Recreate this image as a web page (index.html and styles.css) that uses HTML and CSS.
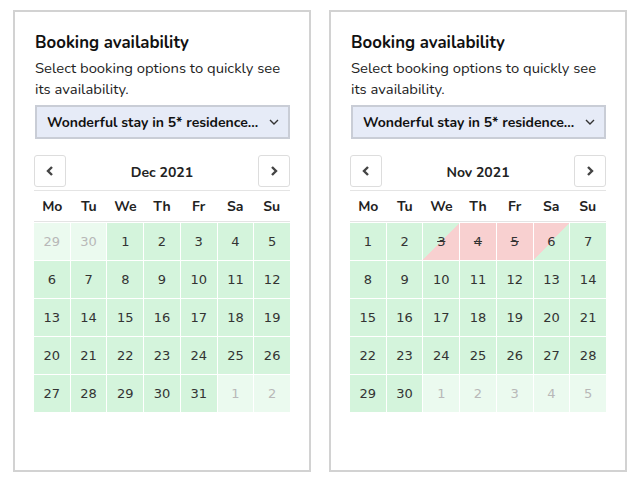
FILE: index.html
```html
<!DOCTYPE html>
<html>
<head>
<meta charset="utf-8">
<link rel="stylesheet" href="styles.css">
</head>
<body>
<div class="page">
  <div class="card">
    <h2 class="title">Booking availability</h2>
    <p class="desc">Select booking options to quickly see its availability.</p>
    <div class="select"><span>Wonderful stay in 5* residence...</span>
      <svg class="chev" width="12" height="8" viewBox="0 0 12 8"><path d="M2 2l4 4 4-4" fill="none" stroke="#333" stroke-width="1.4"/></svg>
    </div>
    <div class="cal">
      <div class="nav">
        <button class="navbtn"><svg width="10" height="12" viewBox="0 0 10 12"><path d="M7 2L3 6l4 4" fill="none" stroke="#444" stroke-width="2.4"/></svg></button>
        <div class="month">Dec 2021</div>
        <button class="navbtn"><svg width="10" height="12" viewBox="0 0 10 12"><path d="M3 2l4 4-4 4" fill="none" stroke="#444" stroke-width="2.4"/></svg></button>
      </div>
      <div class="wk"><span>Mo</span><span>Tu</span><span>We</span><span>Th</span><span>Fr</span><span>Sa</span><span>Su</span></div>
      <div class="grid">
        <div class="d out">29</div><div class="d out">30</div><div class="d">1</div><div class="d">2</div><div class="d">3</div><div class="d">4</div><div class="d">5</div>
        <div class="d">6</div><div class="d">7</div><div class="d">8</div><div class="d">9</div><div class="d">10</div><div class="d">11</div><div class="d">12</div>
        <div class="d">13</div><div class="d">14</div><div class="d">15</div><div class="d">16</div><div class="d">17</div><div class="d">18</div><div class="d">19</div>
        <div class="d">20</div><div class="d">21</div><div class="d">22</div><div class="d">23</div><div class="d">24</div><div class="d">25</div><div class="d">26</div>
        <div class="d">27</div><div class="d">28</div><div class="d">29</div><div class="d">30</div><div class="d">31</div><div class="d out">1</div><div class="d out">2</div>
      </div>
    </div>
  </div>
  <div class="card">
    <h2 class="title">Booking availability</h2>
    <p class="desc">Select booking options to quickly see its availability.</p>
    <div class="select"><span>Wonderful stay in 5* residence...</span>
      <svg class="chev" width="12" height="8" viewBox="0 0 12 8"><path d="M2 2l4 4 4-4" fill="none" stroke="#333" stroke-width="1.4"/></svg>
    </div>
    <div class="cal">
      <div class="nav">
        <button class="navbtn"><svg width="10" height="12" viewBox="0 0 10 12"><path d="M7 2L3 6l4 4" fill="none" stroke="#444" stroke-width="2.4"/></svg></button>
        <div class="month">Nov 2021</div>
        <button class="navbtn"><svg width="10" height="12" viewBox="0 0 10 12"><path d="M3 2l4 4-4 4" fill="none" stroke="#444" stroke-width="2.4"/></svg></button>
      </div>
      <div class="wk"><span>Mo</span><span>Tu</span><span>We</span><span>Th</span><span>Fr</span><span>Sa</span><span>Su</span></div>
      <div class="grid">
        <div class="d">1</div><div class="d">2</div><div class="d half-in"><s>3</s></div><div class="d booked"><s>4</s></div><div class="d booked"><s>5</s></div><div class="d half-out">6</div><div class="d">7</div>
        <div class="d">8</div><div class="d">9</div><div class="d">10</div><div class="d">11</div><div class="d">12</div><div class="d">13</div><div class="d">14</div>
        <div class="d">15</div><div class="d">16</div><div class="d">17</div><div class="d">18</div><div class="d">19</div><div class="d">20</div><div class="d">21</div>
        <div class="d">22</div><div class="d">23</div><div class="d">24</div><div class="d">25</div><div class="d">26</div><div class="d">27</div><div class="d">28</div>
        <div class="d">29</div><div class="d">30</div><div class="d out">1</div><div class="d out">2</div><div class="d out">3</div><div class="d out">4</div><div class="d out">5</div>
      </div>
    </div>
  </div>
</div>
</body>
</html>
```
FILE: styles.css
```css
* { box-sizing: border-box; }
html, body { margin: 0; padding: 0; background: #fff; }
body { font-family: "Nunito", "Lato", "Noto Sans", sans-serif; color: #1a1a1a; }
.page { display: flex; gap: 18px; padding: 10px 0 0 13px; }
.card {
  width: 298px; height: 462px;
  border: 2px solid #d2d2d2;
  padding: 20px 19px 0 20px;
}
.title { margin: 0; font-size: 16.8px; line-height: 22px; font-weight: 700; color: #111; }
.desc { margin: 4px 0 0; font-size: 14.8px; line-height: 21px; color: #222; }
.select {
  margin-top: 5px; height: 34px;
  background: #e6ebf7; border: 2px solid #c9cdd6;
  display: flex; align-items: center; justify-content: space-between;
  padding: 0 8px 0 10px;
  font-size: 14px; font-weight: 700; color: #111; white-space: nowrap;
}
.chev { display: block; }
.cal { margin: 15px 0 0 -1px; width: 256px; }
.nav { display: flex; align-items: center; justify-content: space-between; height: 33px; border-bottom: 1px solid #e4e4e4; padding-bottom: 3px; box-sizing: content-box; }
.navbtn {
  width: 32px; height: 32px; border: 1px solid #ddd; border-radius: 3px; background: #fff;
  display: flex; align-items: center; justify-content: center; padding: 0;
}
.month { font-size: 14px; font-weight: 700; color: #222; padding-top: 3px; }
.wk { display: grid; grid-template-columns: repeat(7, 1fr); height: 31px; align-items: center; padding-top: 1px; border-bottom: 1px solid #e4e4e4; text-align: center; font-size: 14px; font-weight: 700; color: #222; }
.grid { display: grid; grid-template-columns: repeat(7, 1fr); grid-auto-rows: 37px; gap: 1px; margin-top: 1px; }
.d {
  background: #d4f4dc; display: flex; align-items: center; justify-content: center;
  font-family: "DejaVu Sans", Verdana, sans-serif; font-size: 13px; color: #333;
}
.d.out { background: #ebfaef; color: #b8b8b8; }
.d.booked { background: #f8d0d0; }
.d.half-in { background: linear-gradient(to bottom right, #d4f4dc 50%, #f8d0d0 50%); }
.d.half-out { background: linear-gradient(to bottom right, #f8d0d0 50%, #d4f4dc 50%); }
.d s { text-decoration: line-through; }
```
